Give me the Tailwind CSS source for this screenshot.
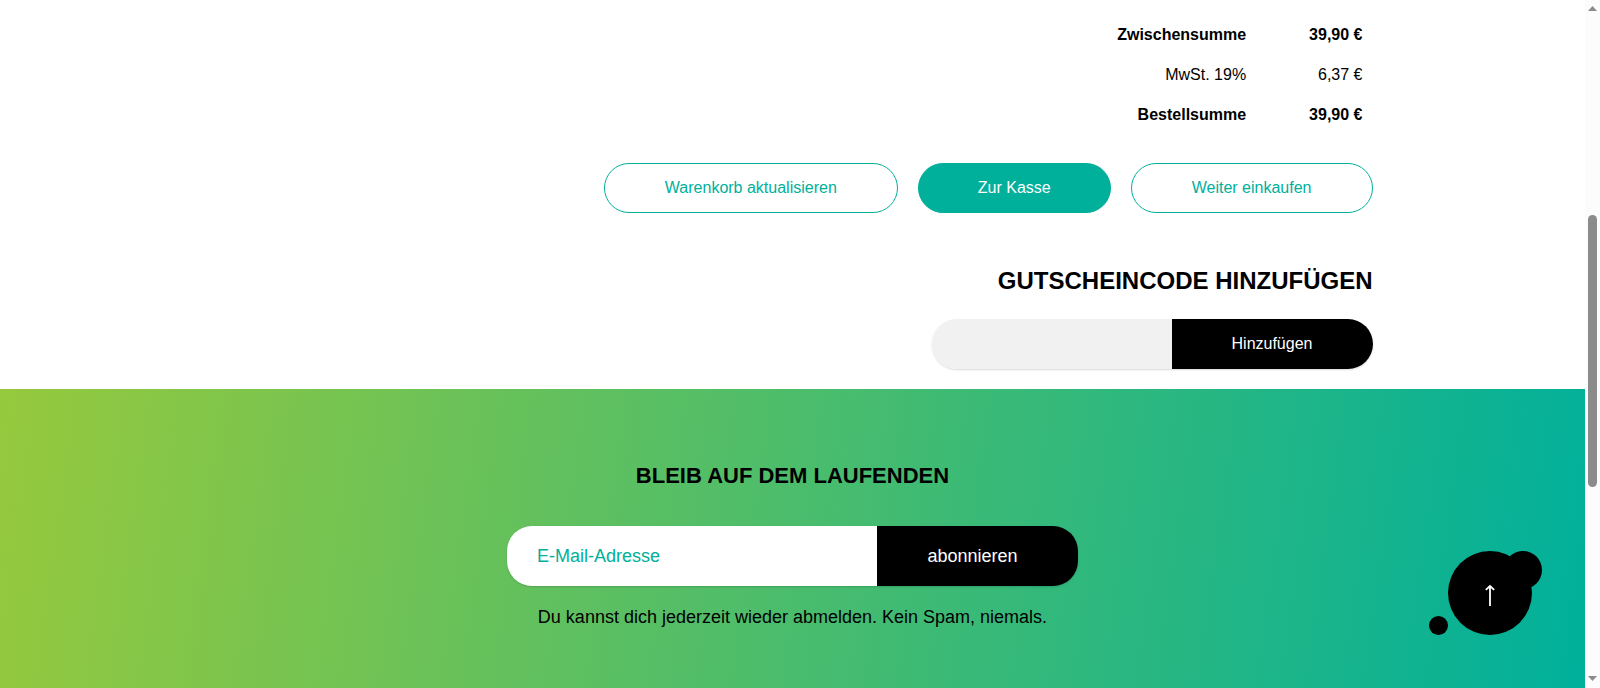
<!DOCTYPE html>
<html lang="de">
<head>
    <meta charset="UTF-8">
    <meta name="viewport" content="width=device-width, initial-scale=1.0">
    <title>Warenkorb</title>
    <script src="https://cdn.jsdelivr.net/npm/@tailwindcss/browser@4"></script>
</head>
<body class="flex min-h-screen bg-white text-black font-['Liberation_Sans',Arial,sans-serif]">
    <div class="flex-1 flex flex-col">
        <main class="w-full max-w-[1160px] mx-auto pt-[15px] pb-5 flex flex-col items-end">
            <!-- Cart totals -->
            <table class="text-base text-right">
                <tbody>
                    <tr class="h-10 font-bold">
                        <th scope="row" class="pr-[63px]">Zwischensumme</th>
                        <td class="pr-[10px]">39,90 €</td>
                    </tr>
                    <tr class="h-10">
                        <th scope="row" class="pr-[63px] font-normal">MwSt. 19%</th>
                        <td class="pr-[10px]">6,37 €</td>
                    </tr>
                    <tr class="h-10 font-bold">
                        <th scope="row" class="pr-[63px]">Bestellsumme</th>
                        <td class="pr-[10px]">39,90 €</td>
                    </tr>
                </tbody>
            </table>

            <!-- Cart actions -->
            <div class="flex flex-wrap justify-end gap-5 mt-7">
                <button type="button" class="h-[50px] px-[60px] rounded-full border border-[#00b09b] text-[#00b09b]">Warenkorb aktualisieren</button>
                <button type="button" class="h-[50px] px-[59px] rounded-full border border-[#00b09b] bg-[#00b09b] text-white">Zur Kasse</button>
                <button type="button" class="h-[50px] px-[60px] rounded-full border border-[#00b09b] text-[#00b09b]">Weiter einkaufen</button>
            </div>

            <!-- Coupon -->
            <h2 class="mt-[50px] text-2xl leading-9 font-bold uppercase"><label for="coupon">Gutscheincode hinzufügen</label></h2>
            <form class="mt-5 flex h-[50px] rounded-full overflow-hidden shadow-[0_1px_2px_rgba(0,0,0,0.15)]">
                <input id="coupon" type="text" class="w-60 px-[30px] bg-[#f1f1f1] outline-none">
                <button type="button" class="w-[201px] bg-black text-white">Hinzufügen</button>
            </form>
        </main>

        <!-- Newsletter -->
        <section class="flex-1 pt-[70px] pb-[54px] flex flex-col items-center bg-[linear-gradient(98deg,#96c93d,#00b09b)]">
            <h2 class="text-[22px] leading-[33px] font-bold uppercase">Bleib auf dem Laufenden</h2>
            <form class="mt-[34px] flex h-[60px] rounded-[25px] overflow-hidden text-lg shadow-[0_1px_2px_rgba(0,0,0,0.15)]">
                <input type="email" aria-label="E-Mail-Adresse" placeholder="E-Mail-Adresse" class="w-[370px] px-[30px] bg-white placeholder:text-[#00b09b] outline-none">
                <button type="button" class="w-[201px] pl-[50px] pr-[60px] bg-black text-white">abonnieren</button>
            </form>
            <p class="mt-[17px] text-lg">Du kannst dich jederzeit wieder abmelden. Kein Spam, niemals.</p>
        </section>
    </div>

    <!-- Back to top -->
    <a href="#" aria-label="Nach oben" class="fixed right-[58px] bottom-[53px]">
        <svg class="w-[113px] h-[84px]" viewBox="0 0 113 84" fill="none">
            <circle cx="61" cy="42" r="42" fill="#000"/>
            <circle cx="94" cy="19" r="19" fill="#000"/>
            <circle cx="9.5" cy="74.5" r="9.5" fill="#000"/>
            <path d="M61 55V35M56.8 38.9L61 35L65.2 38.9" stroke="#fff" stroke-width="1.8"/>
        </svg>
    </a>

    <!-- Scrollbar -->
    <div class="w-[15px] flex flex-col items-center bg-[#fcfcfc] pt-[6px] pb-[7px]" aria-hidden="true">
        <svg class="w-[9px] h-[5px]" viewBox="0 0 9 5"><path d="M4.5 0L9 5H0z" fill="#8b8b8b"/></svg>
        <div class="grow-[204]"></div>
        <div class="grow-[272] w-[9px] rounded-full bg-[#8b8b8b]"></div>
        <div class="grow-[189]"></div>
        <svg class="w-[9px] h-[5px]" viewBox="0 0 9 5"><path d="M4.5 5L9 0H0z" fill="#8b8b8b"/></svg>
    </div>
</body>
</html>
